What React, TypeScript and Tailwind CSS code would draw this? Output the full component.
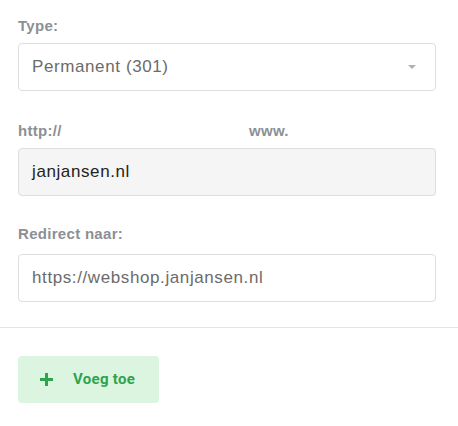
export default function App() {
  const label = "block text-[15px] leading-[20px] font-bold tracking-[0.3px] text-[#8c8f94]";
  const field =
    "flex h-[48px] w-[418px] items-center rounded-[4px] border border-[#dedede] px-[13px] text-[17px] tracking-[0.6px]";

  return (
    <div className="min-h-screen bg-white pl-[18px] pt-[16px] font-['Liberation_Sans',Arial,sans-serif]">
      <span className={label}>Type:</span>
      <div className={`${field} mt-[7px] justify-between bg-white text-[#6b6b6b]`}>
        <span>Permanent (301)</span>
        <span className="mr-[6px] h-0 w-0 border-x-[4px] border-t-[4px] border-x-transparent border-t-[#b0b0b0]" />
      </div>

      <div className="mt-[30px] flex">
        <span className={`${label} w-[231px]`}>http://</span>
        <span className={label}>www.</span>
      </div>
      <div className={`${field} mt-[7px] bg-[#f5f5f5] text-[#222]`}>janjansen.nl</div>

      <span className={`${label} mt-[28px]`}>Redirect naar:</span>
      <div className={`${field} mt-[10px] bg-white text-[#6b6b6b]`}>
        https://webshop.janjansen.nl
      </div>

      <div className="-ml-[18px] mt-[25px] h-px bg-[#e4e4e4]" />

      <button className="mt-[28px] flex h-[47px] w-[141px] items-center rounded-[4px] bg-[#dcf5e0] pl-[22px] font-['Roboto',sans-serif] text-[15px] font-bold tracking-[0.3px] text-[#2ea44f]">
        <svg width="13" height="13" viewBox="0 0 13 13" className="mr-[20px]">
          <path d="M6.5 0v13M0 6.5h13" stroke="currentColor" strokeWidth="3" />
        </svg>
        Voeg toe
      </button>
    </div>
  );
}
